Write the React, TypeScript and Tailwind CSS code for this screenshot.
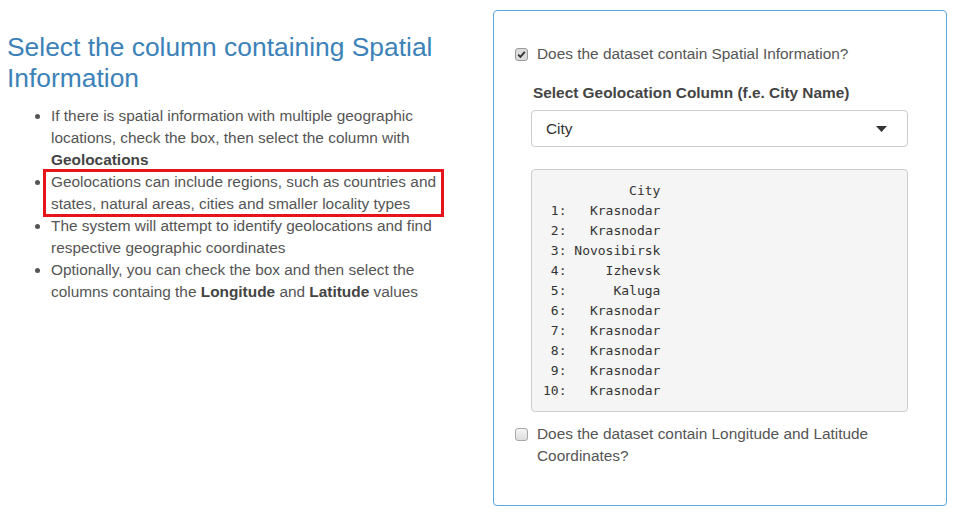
import React from "react";

const rows: [string, string][] = [
  [" 1:", "Krasnodar"],
  [" 2:", "Krasnodar"],
  [" 3:", "Novosibirsk"],
  [" 4:", "Izhevsk"],
  [" 5:", "Kaluga"],
  [" 6:", "Krasnodar"],
  [" 7:", "Krasnodar"],
  [" 8:", "Krasnodar"],
  [" 9:", "Krasnodar"],
  ["10:", "Krasnodar"],
];

function CheckBox({ checked }: { checked?: boolean }) {
  return (
    <span
      className={
        "mt-[5px] flex h-[13px] w-[13px] shrink-0 items-center justify-center rounded-[3px] border " +
        (checked ? "border-[#9a9a9a] bg-[#dcdcdc]" : "border-[#a8a8a8] bg-gradient-to-b from-[#f4f4f4] to-[#dedede]")
      }
    >
      {checked && (
        <svg width="9" height="9" viewBox="0 0 9 9">
          <path d="M1.2 4.6 L3.4 6.9 L7.8 1.8" stroke="#333" strokeWidth="1.8" fill="none" />
        </svg>
      )}
    </span>
  );
}

export default function App() {
  const pad = (s: string, n: number) => " ".repeat(Math.max(0, n - s.length)) + s;
  const preText = [pad("City", 15), ...rows.map(([i, c]) => i + pad(c, 12))].join("\n");

  return (
    <div className="flex h-[519px] w-[958px] bg-white font-['Liberation_Sans',Arial,sans-serif] text-[15.4px] text-[#555]">
      {/* Left column */}
      <div className="w-[460px] shrink-0 pl-[7px] pt-[32px]">
        <h3 className="text-[26.4px] leading-[31px] text-[#3c82b8]">
          Select the column containing Spatial Information
        </h3>
        <ul className="mt-[11px] w-[445px] list-disc pl-[44px] leading-[22px] marker:text-[#555]">
          <li>
            If there is spatial information with multiple geographic locations, check the box, then select the
            column with <b className="text-[#444]">Geolocations</b>
          </li>
          <li className="relative">
            Geolocations can include regions, such as countries and states, natural areas, cities and smaller
            locality types
            <span className="pointer-events-none absolute -left-[8px] -top-[2px] -bottom-[2px] w-[401px] border-[3px] border-[#e8141c]" />
          </li>
          <li>
            The system will attempt to identify geolocations and find respective geographic coordinates
          </li>
          <li>
            Optionally, you can check the box and then select the columns containg the{" "}
            <b className="text-[#444]">Longitude</b> and <b className="text-[#444]">Latitude</b> values
          </li>
        </ul>
      </div>

      {/* Right panel */}
      <div className="ml-[33px] mt-[10px] h-[496px] w-[454px] rounded-[4px] border border-[#5aa9e0] px-[21px] pt-[32px]">
        <label className="flex gap-[9px] leading-[22px]">
          <CheckBox checked />
          <span>Does the dataset contain Spatial Information?</span>
        </label>

        <div className="ml-[16px] mr-[17px] mt-[18px]">
          <div className="pl-[2px] font-bold leading-[20px] text-[#444]">
            Select Geolocation Column (f.e. City Name)
          </div>
          <div className="mt-[7px] flex h-[37px] items-center justify-between rounded-[4px] border border-[#ccc] pl-[14px] pr-[20px] text-[#333]">
            <span>City</span>
            <svg width="11" height="6" viewBox="0 0 11 6">
              <path d="M0 0 L11 0 L5.5 6 Z" fill="#333" />
            </svg>
          </div>
          <pre className="mt-[22px] h-[243px] rounded-[4px] border border-[#ccc] bg-[#f5f5f5] px-[11px] pt-[11px] font-['DejaVu_Sans_Mono',monospace] text-[13px] leading-[20px] text-[#333]">
            {preText}
          </pre>
        </div>

        <label className="mt-[11px] flex gap-[9px] leading-[22px]">
          <CheckBox />
          <span>
            Does the dataset contain Longitude and Latitude
            <br />
            Coordinates?
          </span>
        </label>
      </div>
    </div>
  );
}
